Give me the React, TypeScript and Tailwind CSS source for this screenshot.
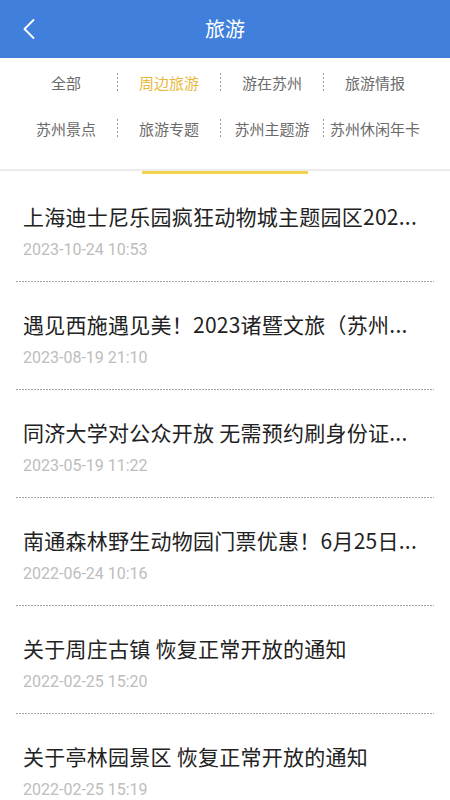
import React from "react";

const tabs = [
  ["全部", "周边旅游", "游在苏州", "旅游情报"],
  ["苏州景点", "旅游专题", "苏州主题游", "苏州休闲年卡"],
];

const news = [
  { title: "上海迪士尼乐园疯狂动物城主题园区202...", date: "2023-10-24 10:53" },
  { title: "遇见西施遇见美！2023诸暨文旅（苏州...", date: "2023-08-19 21:10" },
  { title: "同济大学对公众开放 无需预约刷身份证...", date: "2023-05-19 11:22" },
  { title: "南通森林野生动物园门票优惠！6月25日...", date: "2022-06-24 10:16" },
  { title: "关于周庄古镇 恢复正常开放的通知", date: "2022-02-25 15:20" },
  { title: "关于亭林园景区 恢复正常开放的通知", date: "2022-02-25 15:19" },
];

const App = () => {
  return (
    <div className="w-[450px] min-h-[800px] bg-white font-['Noto_Sans_CJK_SC','Noto_Sans',sans-serif]">
      {/* header */}
      <div className="h-[58px] bg-[#4080dc] grid grid-cols-[58px_1fr_58px] items-center">
        <div className="pl-[22px] flex items-center">
          <svg width="14" height="20" viewBox="0 0 14 20" fill="none">
            <polyline points="11.5,1 2.5,10 11.5,19" stroke="#fff" strokeWidth="1.8" strokeLinecap="round" strokeLinejoin="round" />
          </svg>
        </div>
        <div className="text-center text-white text-[20px] leading-none">旅游</div>
        <div />
      </div>

      {/* category tabs */}
      <div className="pt-px pb-[18px] pl-[14px]">
        {tabs.map((row, r) => (
          <div key={r} className="grid grid-cols-[repeat(4,103px)] h-[46px]">
            {row.map((t, i) => (
              <div key={t} className="flex items-center">
                {i > 0 ? (
                  <div className="w-px h-[18px] bg-[repeating-linear-gradient(to_bottom,#9a9a9a_0_2px,transparent_2px_4px)]" />
                ) : (
                  <div className="w-px" />
                )}
                <span
                  className={`flex-1 text-center text-[15px] leading-none whitespace-nowrap ${
                    t === "周边旅游" ? "text-[#e8b83c]" : "text-[#6a6a6a]"
                  }`}
                >
                  {t}
                </span>
              </div>
            ))}
          </div>
        ))}
      </div>
      <div className="h-[2px] bg-[#ececec]" />
      <div className="h-[3px]">
        <div className="ml-[142px] w-[166px] h-[3px] bg-[#f2d14c]" />
      </div>

      {/* news list */}
      <div>
        {news.map((n) => (
          <div key={n.date + n.title}>
            <div className="pt-[27px] pb-[20px] pl-[23px] pr-[20px]">
              <div className="h-[30px] leading-[30px] text-[21px] tracking-[0.25px] text-[#222] whitespace-nowrap overflow-hidden">
                {n.title}
              </div>
              <div className="mt-2 h-[22px] leading-[22px] text-[16px] text-[#bdbdbd] font-['Roboto',sans-serif]">
                {n.date}
              </div>
            </div>
            <div className="mx-[16px] h-px bg-[repeating-linear-gradient(to_right,#a3a3a3_0_2px,transparent_2px_3px)]" />
          </div>
        ))}
      </div>
    </div>
  );
};

export default App;
